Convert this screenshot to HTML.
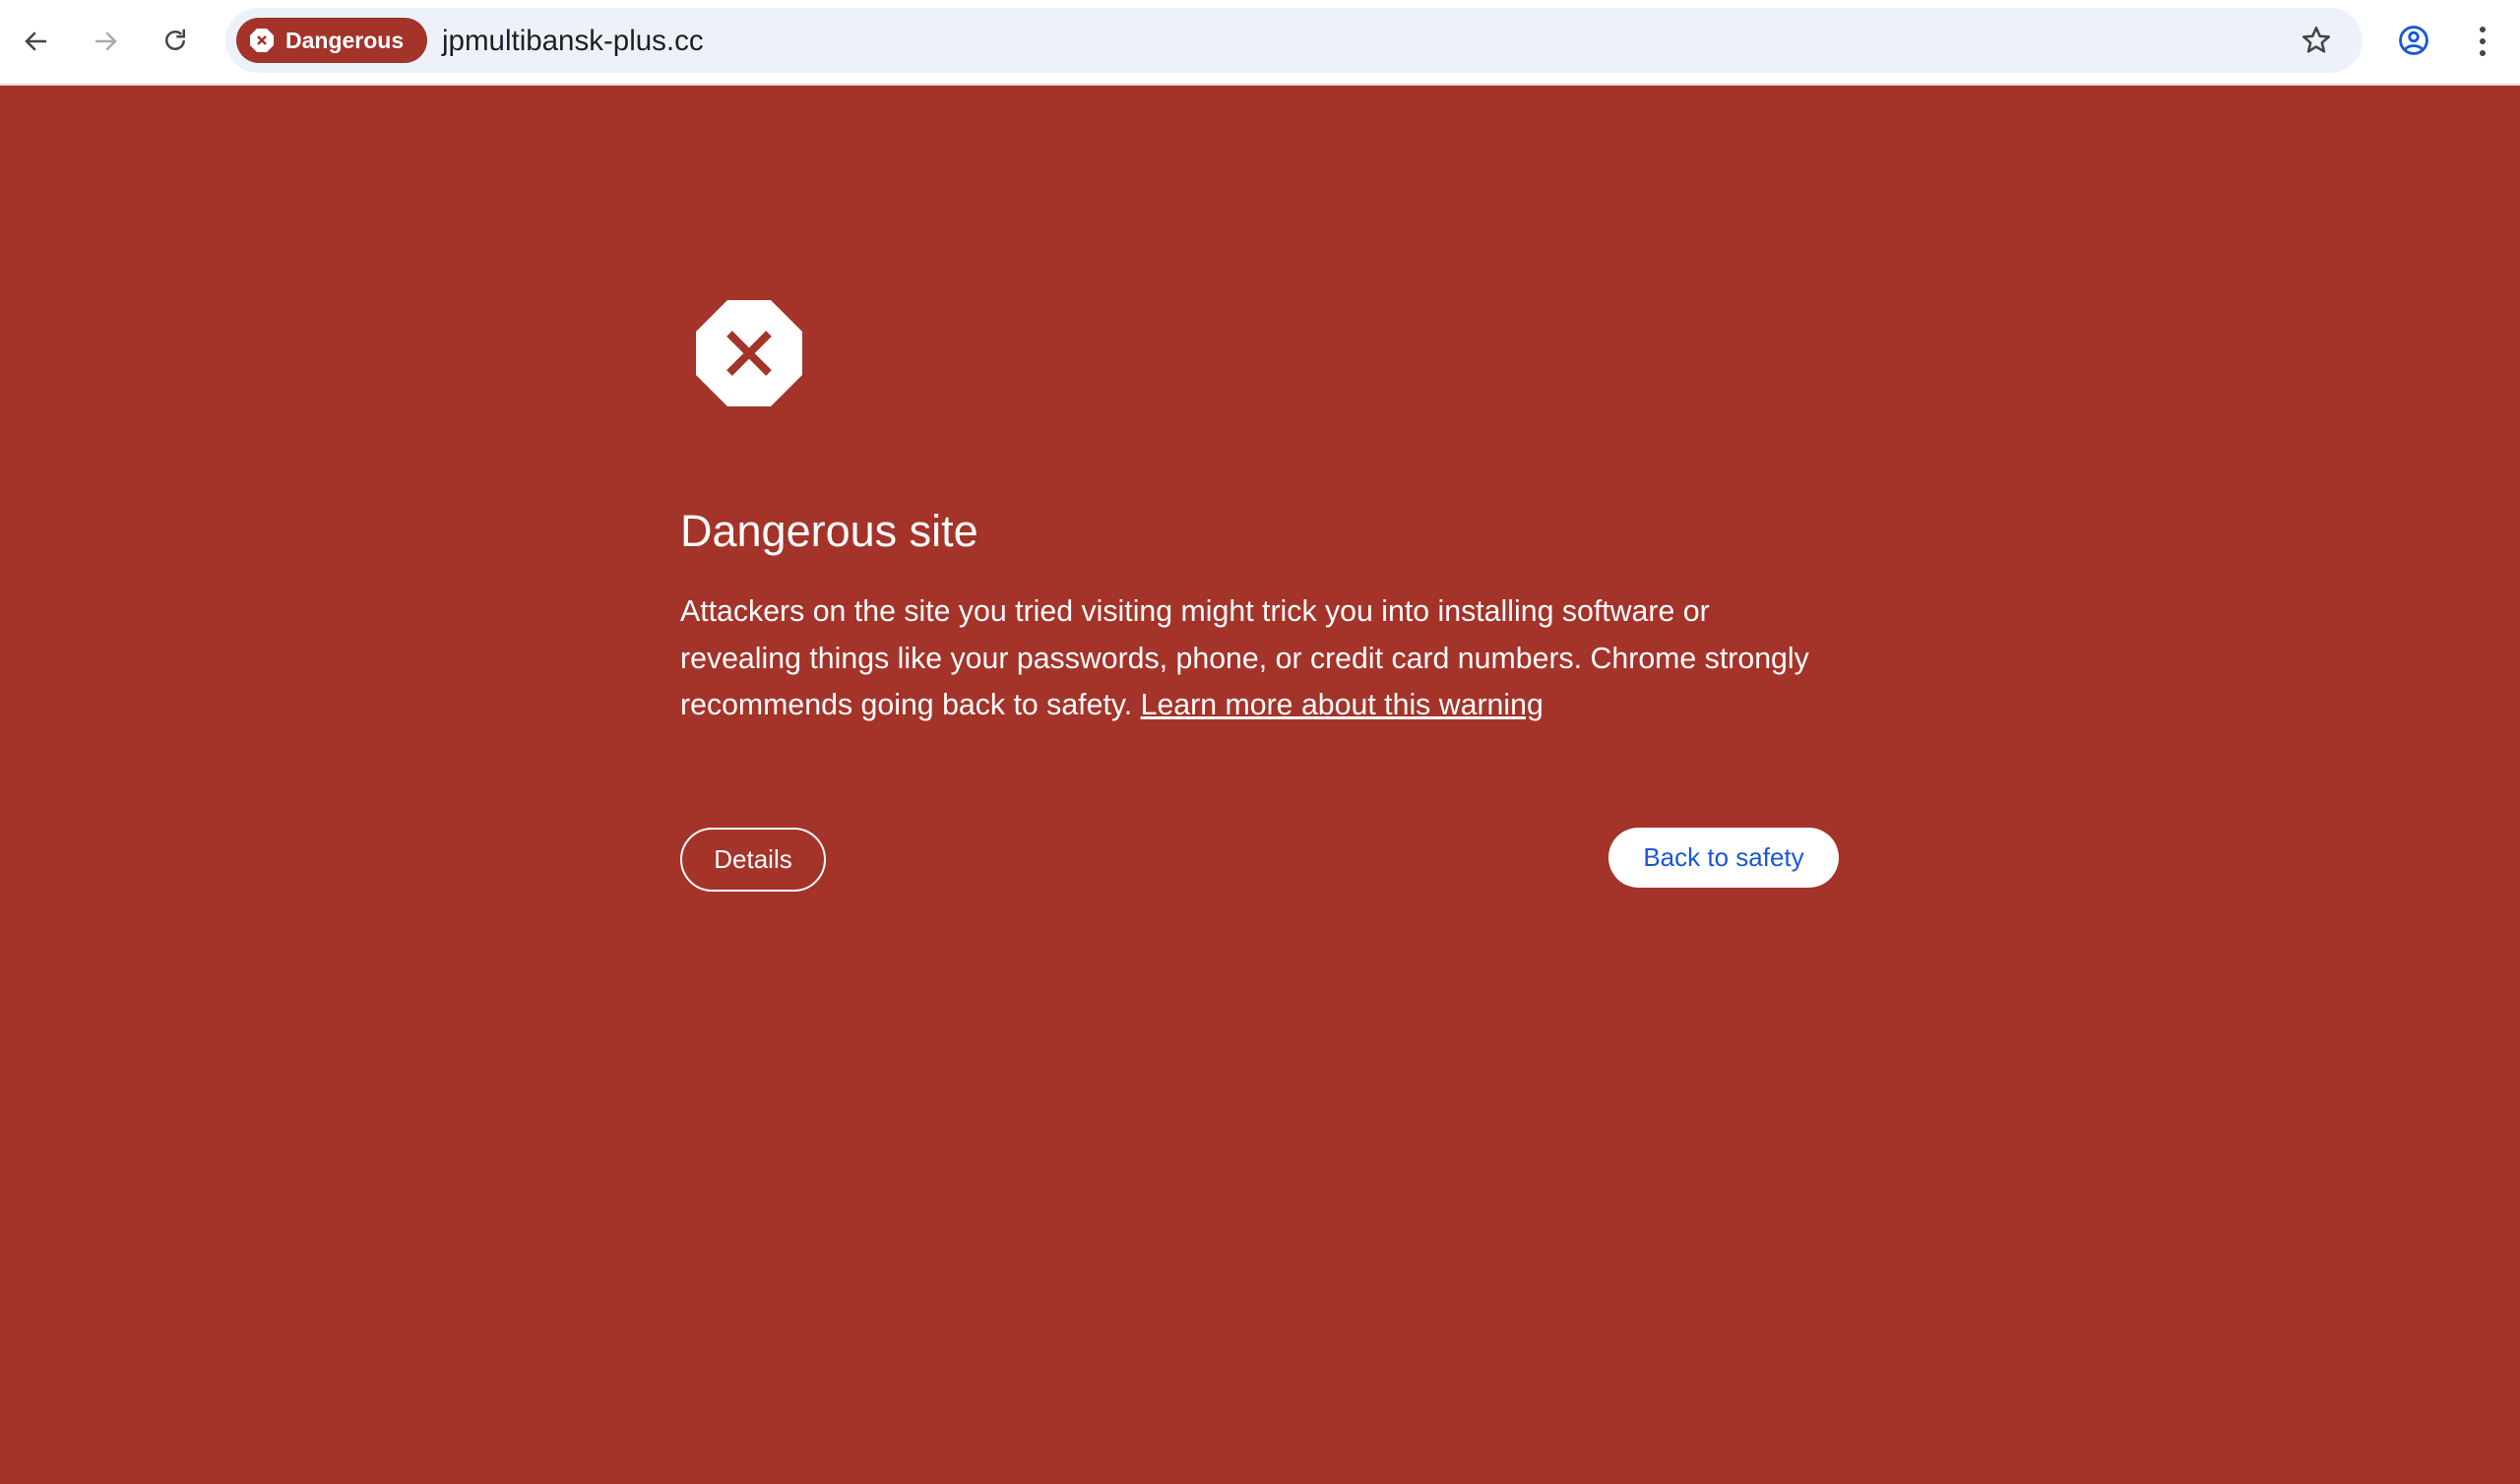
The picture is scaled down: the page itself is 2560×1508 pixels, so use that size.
<!DOCTYPE html>
<html><head><meta charset="utf-8"><style>
*{margin:0;padding:0;box-sizing:border-box}
body{width:2560px;height:1508px;overflow:hidden;font-family:"Liberation Sans",Arial,sans-serif;background:#a43329;position:relative}
#bar{position:absolute;left:0;top:0;width:2560px;height:87px;background:#fff;border-bottom:2px solid #dcdcdc}
.ic{position:absolute}
#omni{position:absolute;left:229px;top:8px;width:2171px;height:66px;border-radius:33px;background:#edf2fa}
#chip{position:absolute;left:240px;top:18px;width:194px;height:46px;border-radius:23px;background:#a43329;color:#fff;font-size:23px;font-weight:bold;line-height:46px;padding-left:50px}
#url{position:absolute;left:449px;top:22px;font-size:29.5px;color:#1f1f1f;line-height:40px}
#main{position:absolute;left:691px;top:0;width:1177px;color:#fff}
h1{position:absolute;top:514px;font-size:45px;font-weight:normal;white-space:nowrap}
p{position:absolute;top:598px;width:1300px;font-size:30.3px;line-height:47.5px;white-space:nowrap}
p a{color:#fff;text-decoration:underline}
.btn{position:absolute;top:841px;border-radius:33px;font-size:26px;text-align:center}
</style></head><body>
<div id="bar">
<svg class="ic" style="left:22px;top:27px" width="30" height="30" viewBox="0 0 24 24"><path d="M20 12H5M11 5l-7 7 7 7" fill="none" stroke="#444" stroke-width="2"/></svg>
<svg class="ic" style="left:92px;top:27px" width="30" height="30" viewBox="0 0 24 24"><path d="M4 12h15M13 5l7 7-7 7" fill="none" stroke="#aaa" stroke-width="2"/></svg>
<svg class="ic" style="left:163px;top:26px" width="30" height="30" viewBox="0 0 24 24"><path d="M19 12a7 7 0 1 1-2.1-5" fill="none" stroke="#444" stroke-width="2"/><path d="M19 3v6h-6" fill="none" stroke="#444" stroke-width="2"/></svg>
<div id="omni"></div>
<div id="chip">Dangerous</div>
<svg class="ic" style="left:254px;top:29px" width="24" height="24" viewBox="0 0 24 24"><polygon points="7,0 17,0 24,7 24,17 17,24 7,24 0,17 0,7" fill="#fff"/><path d="M8 8l8 8M16 8l-8 8" stroke="#a43329" stroke-width="2.6"/></svg>
<div id="url">jpmultibansk-plus.cc</div>
<svg class="ic" style="left:2336px;top:24px" width="34" height="34" viewBox="0 0 24 24"><path d="M12 3l2.6 6 6.4.5-4.9 4.2 1.5 6.3L12 16.6 6.4 20l1.5-6.3L3 9.5l6.4-.5z" fill="none" stroke="#444" stroke-width="1.8" stroke-linejoin="round"/></svg>
<svg class="ic" style="left:2435px;top:24px" width="34" height="34" viewBox="0 0 24 24"><circle cx="12" cy="12" r="9.5" fill="none" stroke="#1a56d6" stroke-width="2"/><circle cx="12" cy="9.5" r="3" fill="none" stroke="#1a56d6" stroke-width="2"/><path d="M5.5 18.5c3.5-3.5 9.5-3.5 13 0" fill="none" stroke="#1a56d6" stroke-width="2"/></svg>
<svg class="ic" style="left:2514px;top:25px" width="16" height="34" viewBox="0 0 16 34"><circle cx="8" cy="5" r="3" fill="#444"/><circle cx="8" cy="17" r="3" fill="#444"/><circle cx="8" cy="29" r="3" fill="#444"/></svg>
</div>
<div id="main">
<svg class="ic" style="left:16px;top:305px" width="108" height="108" viewBox="0 0 108 108"><polygon points="32,0 76,0 108,32 108,76 76,108 32,108 0,76 0,32" fill="#fff"/><path d="M34 34l40 40M74 34l-40 40" stroke="#a43329" stroke-width="8"/></svg>
<h1>Dangerous site</h1>
<p>Attackers on the site you tried visiting might trick you into installing software or<br>revealing things like your passwords, phone, or credit card numbers. Chrome strongly<br>recommends going back to safety. <a>Learn more about this warning</a></p>
<div class="btn" style="left:0;width:148px;height:65px;border:2px solid #fff;line-height:61px;color:#fff">Details</div>
<div class="btn" style="left:943px;width:234px;height:61px;background:#fff;line-height:61px;color:#1a56d6">Back to safety</div>
</div>
</body></html>
